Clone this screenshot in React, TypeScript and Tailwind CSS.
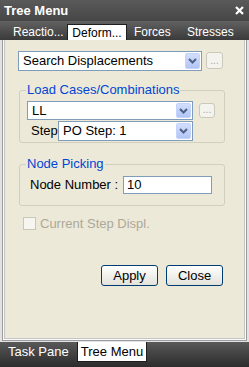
import React from 'react';

const Chevron = () => (
  <svg width="9" height="6" viewBox="0 0 9 6">
    <path d="M1 1l3.5 3.5L8 1" fill="none" stroke="#4d6185" strokeWidth="2" />
  </svg>
);

const ComboBox = ({ value, className }: { value: string; className: string }) => (
  <div className={`flex items-stretch bg-white border border-[#7f9db9] p-px ${className}`}>
    <span className="flex-1 flex items-center pl-[3px] text-black">{value}</span>
    <span className="w-[15px] flex items-center justify-center rounded-[2px] border border-[#c3d3fd] bg-gradient-to-b from-[#d3defb] to-[#b1c5f5]">
      <Chevron />
    </span>
  </div>
);

const Dots = ({ className }: { className: string }) => (
  <div className={`flex items-end justify-center rounded-[3px] border border-[#cac8bb] bg-[#f4f3ee] text-[#aca899] text-[10px] leading-[10px] pb-[2px] ${className}`}>
    ...
  </div>
);

const GroupBox = ({ title, className, children }: { title: string; className: string; children: React.ReactNode }) => (
  <div className={`relative ml-px w-[206px] border border-[#d0d0bf] rounded-[3px] ${className}`}>
    <span className="absolute -top-[9px] left-[6px] px-px bg-[#ece9d8] text-[#0046d5] leading-[15px]">{title}</span>
    {children}
  </div>
);

const XpButton = ({ label }: { label: string }) => (
  <button className="w-[57px] h-[21px] rounded-[3px] border border-[#003c74] bg-gradient-to-b from-white to-[#e3e2da] text-black leading-[17px]">
    {label}
  </button>
);

const App = () => {
  return (
    <div className="w-[249px] h-[367px] flex flex-col text-[13px] font-['Liberation_Sans',Arial,sans-serif] overflow-hidden">
      {/* title bar */}
      <div className="h-[21px] flex items-center justify-between pl-[4px] pr-[5px] bg-gradient-to-b from-[#5a5a5a] to-[#464646] text-white font-bold">
        <span>Tree Menu</span>
        <svg width="9" height="9" viewBox="0 0 9 9">
          <path d="M1 1l7 7M8 1L1 8" stroke="#fff" strokeWidth="2.2" />
        </svg>
      </div>

      {/* tabs */}
      <div className="h-[19px] flex items-end bg-gradient-to-b from-[#626262] to-[#3a3a3a] text-[12px] text-white">
        <div className="w-[67px] h-[16px] flex items-center pl-[13px]">Reactio...</div>
        <div className="w-[60px] h-[16px] flex items-center justify-center bg-white border border-b-0 border-[#1e1e1e] text-black">Deform...</div>
        <div className="w-[60px] h-[16px] flex items-center pl-[7px]">Forces</div>
        <div className="h-[16px] flex items-center">Stresses</div>
      </div>

      {/* content */}
      <div className="flex-1 px-[2px] pb-[1px] bg-[#e2e2e2]">
        <div className="h-full border border-t-0 border-[#9c9c9c] px-px pb-px bg-[#fbfbfb]">
          <div className="h-full border border-t-0 border-[#c4c4c4] bg-[#ece9d8] pl-[13px] pt-[11px]">
            <div className="flex items-start">
              <ComboBox value="Search Displacements" className="w-[184px] h-[20px]" />
              <Dots className="ml-[4px] mt-px w-[17px] h-[17px]" />
            </div>

            <GroupBox title="Load Cases/Combinations" className="mt-[19px] pt-[10px] pl-[7px] pb-[1px]">
              <div className="flex items-start">
                <ComboBox value="LL" className="w-[166px] h-[19px]" />
                <Dots className="ml-[6px] mt-[2px] w-[16px] h-[15px]" />
              </div>
              <div className="flex items-center mt-px">
                <span className="w-[31px] pl-[4px] text-black">Step</span>
                <ComboBox value="PO Step: 1" className="w-[135px] h-[20px]" />
              </div>
            </GroupBox>

            <GroupBox title="Node Picking" className="mt-[21px] pt-[10px] pb-[10px] pl-[10px]">
              <div className="flex items-center">
                <span className="w-[93px] text-black">Node Number :</span>
                <div className="w-[89px] h-[18px] flex items-center border border-[#7f9db9] bg-white pl-[3px] text-black">10</div>
              </div>
            </GroupBox>

            <div className="flex items-center mt-[8px] ml-[5px]">
              <div className="w-[13px] h-[13px] border border-[#c9c7ba] bg-[#f6f5ef]" />
              <span className="ml-[4px] text-[#aca899]">Current Step Displ.</span>
            </div>

            <div className="flex gap-[8px] pl-[83px] mt-[32px]">
              <XpButton label="Apply" />
              <XpButton label="Close" />
            </div>
          </div>
        </div>
      </div>

      {/* bottom tabs */}
      <div className="h-[25px] flex items-start bg-gradient-to-b from-[#595959] to-[#2c2c2c]">
        <div className="w-[77px] h-[20px] flex items-center pl-[8px] text-white">Task Pane</div>
        <div className="w-[70px] h-[20px] flex items-center justify-center bg-white border border-t-0 border-[#1e1e1e] text-black">Tree Menu</div>
      </div>
    </div>
  );
};

export default App;
